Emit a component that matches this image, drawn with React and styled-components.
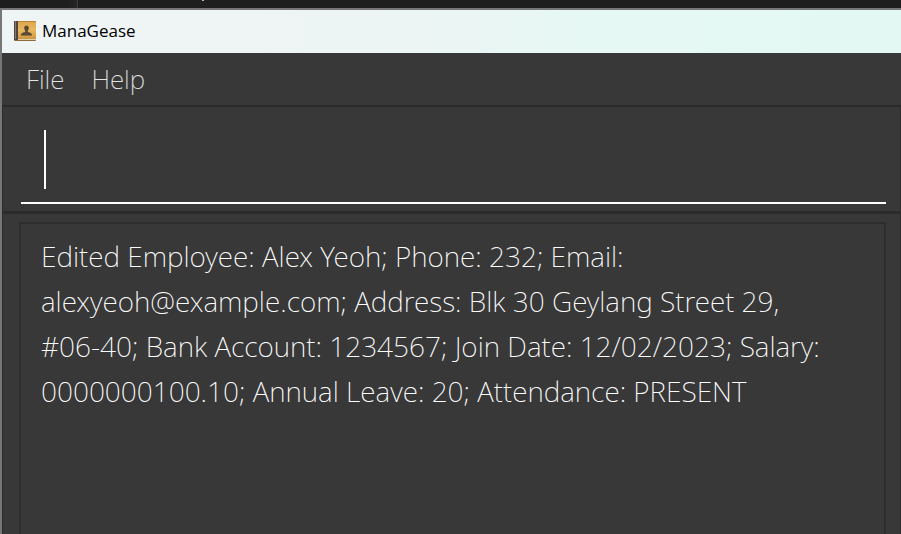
import React from "react";
import styled, { createGlobalStyle } from "styled-components";

const GlobalStyle = createGlobalStyle`
  *, *::before, *::after { box-sizing: border-box; }
  html, body, #root { height: 100%; }
  body {
    margin: 0;
    overflow: hidden;
    background: #383838;
    font-family: "Open Sans", "Noto Sans", sans-serif;
  }
`;

const Screen = styled.div`
  display: flex;
  flex-direction: column;
  height: 100%;
`;

const Backdrop = styled.div`
  flex: none;
  position: relative;
  height: 8px;
  background: linear-gradient(90deg, #1e1e1e 0 68px, #262626 77px, #3c3c3c 77px 78px, #1e1e1e 78px);
`;

const BackdropMark = styled.span`
  position: absolute;
  left: 202px;
  top: 0;
  width: 2px;
  height: 1px;
  background: #b8b8b8;
`;

const Window = styled.main`
  flex: 1;
  min-height: 0;
  display: flex;
  flex-direction: column;
  border-top: 2px solid #777777;
  border-left: 2px solid #777777;
  background: #383838;
`;

const TitleBar = styled.header`
  flex: none;
  display: flex;
  align-items: center;
  gap: 5px;
  height: 43px;
  padding: 0 12px 2px;
  background: linear-gradient(95deg, #eef5f4 0%, #eff5f4 20%, #ebf5f4 50%, #e6f8f4 65%, #e3f8f3 100%);
`;

const Title = styled.h1`
  margin: 0;
  font-size: 17px;
  line-height: 24px;
  font-weight: 400;
  color: #000000;
`;

const MenuBar = styled.nav`
  flex: none;
  display: flex;
  gap: 27px;
  height: 52px;
  padding: 0 24px;
`;

const MenuButton = styled.button`
  border: 0;
  padding: 0;
  background: none;
  font-family: "Noto Sans", "Open Sans", sans-serif;
  font-size: 26px;
  font-weight: 200;
  line-height: 52px;
  color: #e4e4e4;
`;

const CommandPane = styled.form`
  flex: none;
  position: relative;
  padding: 12px 14px 7px 18px;
  border: 1px solid #2b2b2b;
  border-width: 2px 1px 1px;
`;

const CommandInput = styled.input`
  display: block;
  width: 100%;
  height: 85px;
  border: 0;
  border-bottom: 2px solid #ffffff;
  border-radius: 0;
  padding: 0 24px;
  outline: 0;
  background: transparent;
  font-family: inherit;
  font-size: 28px;
  font-weight: 300;
  color: #ffffff;
`;

const Caret = styled.span`
  position: absolute;
  left: 41px;
  top: 23px;
  width: 2px;
  height: 59px;
  background: #ffffff;
`;

const ResultPane = styled.section`
  flex: 1;
  min-height: 0;
  display: flex;
  padding: 8px 14px 0 16px;
  border: 1px solid #2b2b2b;
  border-width: 2px 1px 0;
`;

const ResultDisplay = styled.textarea`
  flex: 1;
  border: 2px solid #2d2d2d;
  border-bottom: 0;
  padding: 10px 40px 10px 20px;
  outline: 0;
  resize: none;
  overflow: hidden;
  background: #383838;
  font-family: "Noto Sans", "Open Sans", sans-serif;
  font-size: 28px;
  font-weight: 200;
  line-height: 45px;
  color: #ffffff;
`;

function BookIcon() {
  return (
    <svg width="23" height="22" viewBox="0 0 23 22" aria-hidden="true">
      <defs>
        <linearGradient id="cover" x1="0" y1="0" x2="0" y2="1">
          <stop offset="0" stopColor="#dda64d" />
          <stop offset="0.5" stopColor="#e8b760" />
          <stop offset="1" stopColor="#cc963f" />
        </linearGradient>
      </defs>
      <rect x="0" y="1" width="22" height="20" rx="1" fill="#8b6c3d" />
      <rect x="1" y="19" width="21" height="1" fill="#ded0b0" />
      <rect x="0" y="1" width="4" height="19" fill="#51453f" />
      <rect x="1" y="1" width="1" height="18" fill="#887b72" />
      <rect x="4" y="1" width="18" height="18" fill="url(#cover)" />
      <rect x="4" y="1" width="18" height="1" fill="#b98334" />
      <path
        d="M12.5 5.500c1.600 0 2.400 1.200 2.300 2.800-.1 1.200-.6 1.800-1 2.400v1.300c1.300.5 4.200.6 4.200 3.500H7c0-2.900 2.900-3 4.200-3.500v-1.300c-.4-.6-.9-1.200-1-2.400-.1-1.600.7-2.800 2.300-2.800z"
        fill="#5b4934"
      />
    </svg>
  );
}

const result =
  "Edited Employee: Alex Yeoh; Phone: 232; Email: alexyeoh@example.com; " +
  "Address: Blk 30 Geylang Street 29, #06-40; Bank Account: 1234567; " +
  "Join Date: 12/02/2023; Salary: 0000000100.10; Annual Leave: 20; " +
  "Attendance: PRESENT";

export default function App() {
  return (
    <Screen>
      <GlobalStyle />
      <Backdrop>
        <BackdropMark />
      </Backdrop>
      <Window>
        <TitleBar>
          <BookIcon />
          <Title>ManaGease</Title>
        </TitleBar>
        <MenuBar aria-label="Main menu">
          <MenuButton type="button">File</MenuButton>
          <MenuButton type="button">Help</MenuButton>
        </MenuBar>
        <CommandPane onSubmit={(event) => event.preventDefault()}>
          <CommandInput type="text" aria-label="Command" />
          <Caret />
        </CommandPane>
        <ResultPane>
          <ResultDisplay readOnly aria-label="Result" value={result} />
        </ResultPane>
      </Window>
    </Screen>
  );
}
